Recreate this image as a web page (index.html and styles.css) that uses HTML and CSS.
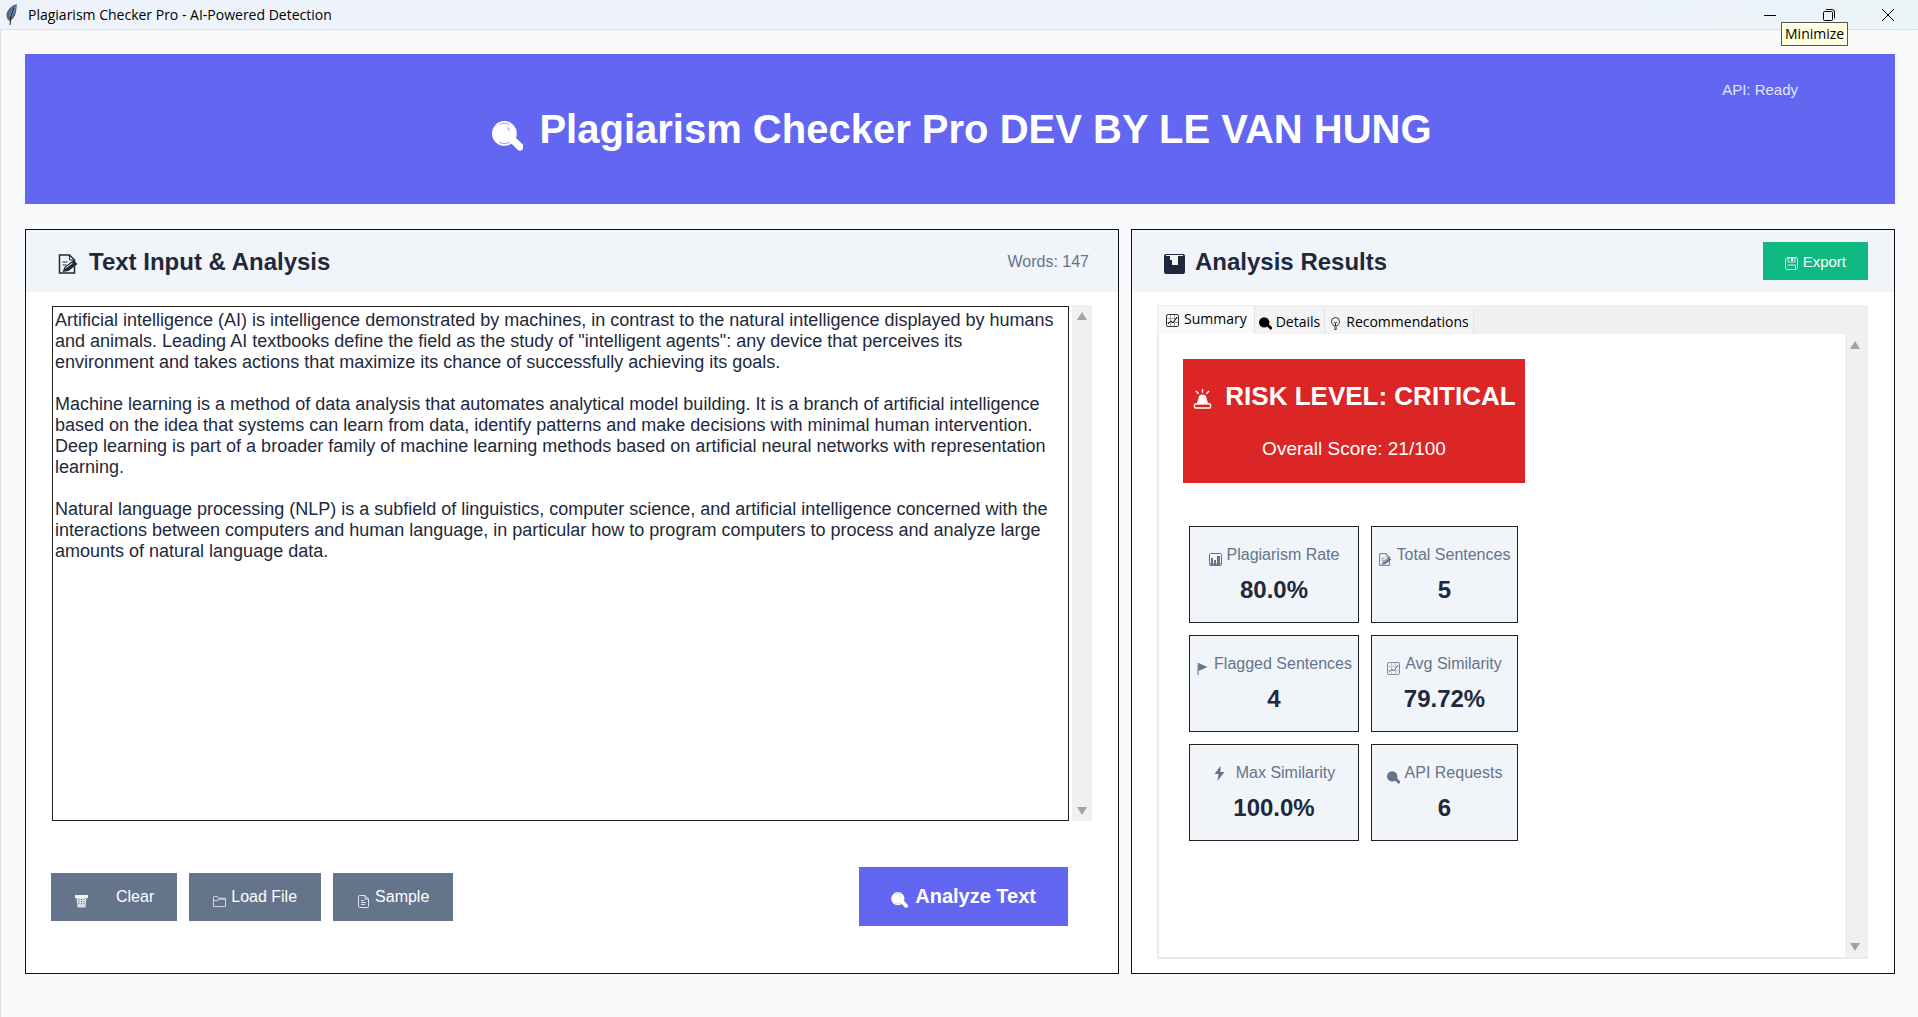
FILE: index.html
```html
<!DOCTYPE html>
<html lang="en">
<head>
<meta charset="utf-8">
<title>Plagiarism Checker Pro - AI-Powered Detection</title>
<link rel="stylesheet" href="styles.css">
</head>
<body>
<svg class="sprite" aria-hidden="true">
  <symbol id="magnifier" viewBox="0 0 30 29">
    <path d="M20 18l7 7" stroke="currentColor" stroke-width="7" stroke-linecap="round"/>
    <circle cx="12" cy="12" r="12" fill="currentColor"/>
    <path class="glint" d="M7 3.500q5-2.500 10 0M7 20.500q5 2.500 10 0M14.500 6.500q2.500.5 2 3" fill="none"/>
  </symbol>
  <symbol id="memo" viewBox="0 0 20 20">
    <path d="M1 1h10l5 5v13H1z" fill="none" stroke="currentColor" stroke-width="1.500"/>
    <path d="M11 1v5h5M4 8h5M4 11h4" fill="none" stroke="currentColor"/>
    <path d="M4 18l2-5 9-7 4 4-9 7z" fill="currentColor"/>
    <path d="M7 14l7-5" class="memo-line"/>
  </symbol>
  <symbol id="bars" viewBox="0 0 21 20">
    <path fill="currentColor" d="M2 0h17q2 0 2 2v16q0 2-2 2H2q-2 0-2-2V2q0-2 2-2z"/>
    <path class="bars-gap" d="M2 1h17v1h-5v9H8V6H6V2H2z"/>
  </symbol>
  <symbol id="columns" viewBox="0 0 13 13">
    <rect x=".5" y=".5" width="12" height="12" rx="1" fill="none" stroke="currentColor"/>
    <path d="M2 5h2v7H2zM5 7h2v5H5zM8 3h3v9H8z" fill="currentColor"/>
    <path d="M1 10h11v2H1z" fill="currentColor" opacity=".6"/>
  </symbol>
  <symbol id="chart" viewBox="0 0 13 13">
    <rect x=".5" y=".5" width="12" height="12" rx="1.500" fill="none" stroke="currentColor" opacity=".8"/>
    <path d="M4.500 1v11M8.500 1v11M1 4.500h11M1 8.500h11" stroke="currentColor" opacity=".35"/>
    <path d="M2 10l3-3 2 2 4-6" fill="none" stroke="currentColor"/>
  </symbol>
  <symbol id="bulb" viewBox="0 0 9 13">
    <path d="M3 9Q.5 6.500.5 4.500a4 4 0 0 1 8 0Q8.500 6.500 6 9zM3 11h3M3.500 12.500h2M3 5l1.500 1L6 5M4.500 6v3" fill="none" stroke="currentColor" opacity=".8"/>
  </symbol>
  <symbol id="siren" viewBox="0 0 19 21">
    <path d="M4 16V14l2-7q3.500-2.500 7 0l2 7v2z" fill="currentColor"/>
    <path d="M9.500 0v4M2.500 2l3 3M16.500 2l-3 3" stroke="currentColor" stroke-width="1.500"/>
    <rect x="1" y="15.500" width="17" height="4.500" rx="2" fill="none" stroke="currentColor" stroke-width="1.500"/>
  </symbol>
  <symbol id="flag" viewBox="0 0 10 13">
    <path d="M.5 1v12" stroke="currentColor"/><path d="M1 1l9 4-9 4z" fill="currentColor"/>
  </symbol>
  <symbol id="bolt" viewBox="0 0 10 15">
    <path d="M6 0L0 8h4l-1 7 7-9H6z" fill="currentColor"/>
  </symbol>
  <symbol id="trash" viewBox="0 0 13 13">
    <path d="M0 0h13v3H0z" fill="currentColor" opacity=".9"/>
    <path d="M1.500 3h10l-1 9.500h-8z" fill="currentColor" opacity=".75"/>
    <path d="M4 4v6M6.500 4v6M9 4v6" stroke="#64748b" stroke-dasharray="1 1"/>
  </symbol>
  <symbol id="folder" viewBox="0 0 14 12">
    <path d="M.5 11V1.500q0-1 1-1h3L6 2.500h6.500q1 0 1 1V11q0 .5-.5.5H1q-.5 0-.5-.5zM.5 5H5l1-1.500h7" fill="none" stroke="currentColor" opacity=".8"/>
  </symbol>
  <symbol id="page" viewBox="0 0 11 13">
    <path d="M1.500.5H7l3.500 3.500v7.500q0 1-1 1h-8q-1 0-1-1v-10q0-1 1-1zM7 .5V4h3.500M3 5.500h3M3 7.500h5M3 9.500h4" fill="none" stroke="currentColor" opacity=".8"/>
  </symbol>
  <symbol id="disk" viewBox="0 0 13 13">
    <path d="M2 .5h9.500l1 1.500v9.500l-1 1H1.500l-1-1V2zM3 1h7v4H3zM2.500 8h8v4" fill="none" stroke="currentColor" opacity=".8"/><path d="M6 1h2v3H6z" fill="currentColor"/>
  </symbol>
</svg>

<header class="titlebar">
  <svg class="feather" viewBox="0 0 12 21" aria-hidden="true">
    <path d="M11 0Q4 2 1 8-.5 12 2 16l2 1q5-3 6-9z" fill="#5c646e"/>
    <path d="M10 2Q5 5 3 12l2 1q4-4 5-11z" fill="#4f9be8"/>
    <path d="M8 4Q4 11 4 21" fill="none" stroke="#15181c"/>
  </svg>
  <span class="window-title">Plagiarism Checker Pro - AI-Powered Detection</span>
  <div class="window-buttons">
    <button aria-label="Minimize"><svg width="14" height="14" viewBox="0 0 14 14"><path d="M1 7.500h12"/></svg><span class="tooltip" role="tooltip">Minimize</span></button>
    <button aria-label="Restore"><svg width="14" height="14" viewBox="0 0 14 14"><rect x="1.500" y="3.500" width="9" height="9" rx="1"/><path d="M4 1.500h6q2.500 0 2.500 2.500v6.500"/></svg></button>
    <button aria-label="Close"><svg width="14" height="14" viewBox="0 0 14 14"><path d="M1 1l12 12M13 1L1 13"/></svg></button>
  </div>
</header>

<div class="app">
  <div class="banner">
    <h1><svg class="icon-xl"><use href="#magnifier"/></svg>Plagiarism Checker Pro DEV BY LE VAN HUNG</h1>
    <span class="api-status">API: Ready</span>
  </div>

  <main class="columns">
    <section class="panel">
      <div class="panel-head">
        <h2><svg class="icon-lg"><use href="#memo"/></svg><label for="source">Text Input &amp; Analysis</label></h2>
        <span class="word-count">Words: 147</span>
      </div>
      <div class="input-body">
        <div class="editor">
          <textarea id="source" spellcheck="false">Artificial intelligence (AI) is intelligence demonstrated by machines, in contrast to the natural intelligence displayed by humans and animals. Leading AI textbooks define the field as the study of "intelligent agents": any device that perceives its environment and takes actions that maximize its chance of successfully achieving its goals.

Machine learning is a method of data analysis that automates analytical model building. It is a branch of artificial intelligence based on the idea that systems can learn from data, identify patterns and make decisions with minimal human intervention. Deep learning is part of a broader family of machine learning methods based on artificial neural networks with representation learning.

Natural language processing (NLP) is a subfield of linguistics, computer science, and artificial intelligence concerned with the interactions between computers and human language, in particular how to program computers to process and analyze large amounts of natural language data.</textarea>
          <div class="scrollbar"><i class="up"></i><i class="down"></i></div>
        </div>
        <div class="actions">
          <button class="btn btn-clear"><svg class="icon"><use href="#trash"/></svg>Clear</button>
          <button class="btn"><svg class="icon"><use href="#folder"/></svg>Load File</button>
          <button class="btn"><svg class="icon"><use href="#page"/></svg>Sample</button>
          <button class="btn btn-analyze"><svg class="icon-md"><use href="#magnifier"/></svg>Analyze Text</button>
        </div>
      </div>
    </section>

    <section class="panel">
      <div class="panel-head">
        <h2><svg class="icon-lg"><use href="#bars"/></svg>Analysis Results</h2>
        <button class="btn btn-export"><svg class="icon"><use href="#disk"/></svg>Export</button>
      </div>
      <div class="notebook">
        <div class="tabs" role="tablist">
          <button class="tab tab-active" role="tab" aria-selected="true"><svg class="icon"><use href="#chart"/></svg>Summary</button>
          <button class="tab" role="tab"><svg class="icon"><use href="#magnifier"/></svg>Details</button>
          <button class="tab" role="tab"><svg class="icon"><use href="#bulb"/></svg>Recommendations</button>
        </div>
        <div class="pane" role="tabpanel">
          <div class="summary">
            <div class="risk">
              <p class="risk-level"><svg class="icon-lg"><use href="#siren"/></svg>RISK LEVEL: CRITICAL</p>
              <p class="risk-score">Overall Score: 21/100</p>
            </div>
            <div class="metrics">
              <div class="metric"><span class="metric-name"><svg class="icon"><use href="#columns"/></svg>Plagiarism Rate</span><strong>80.0%</strong></div>
              <div class="metric"><span class="metric-name"><svg class="icon"><use href="#memo"/></svg>Total Sentences</span><strong>5</strong></div>
              <div class="metric"><span class="metric-name"><svg class="icon"><use href="#flag"/></svg>Flagged Sentences</span><strong>4</strong></div>
              <div class="metric"><span class="metric-name"><svg class="icon"><use href="#chart"/></svg>Avg Similarity</span><strong>79.72%</strong></div>
              <div class="metric"><span class="metric-name metric-bolt"><svg class="icon"><use href="#bolt"/></svg>Max Similarity</span><strong>100.0%</strong></div>
              <div class="metric"><span class="metric-name"><svg class="icon"><use href="#magnifier"/></svg>API Requests</span><strong>6</strong></div>
            </div>
          </div>
          <div class="scrollbar"><i class="up"></i><i class="down"></i></div>
        </div>
      </div>
    </section>
  </main>
</div>
</body>
</html>
```
FILE: styles.css
```css
* { box-sizing: border-box; }

body {
  margin: 0;
  min-height: 100vh;
  display: flex;
  flex-direction: column;
  background: #f9fafc;
  color: #1e293b;
  font-family: "Liberation Sans", Arial, sans-serif;
  font-size: 16px;
}

h1, h2, p { margin: 0; }
button { border: 0; margin: 0; padding: 0; font: inherit; }
svg { flex: none; }
.sprite { position: absolute; width: 0; height: 0; }

.icon { width: 13px; height: 13px; }
.icon-md { width: 17px; height: 16px; }
.icon-lg { width: 21px; height: 20px; }
.icon-xl { width: 31px; height: 30px; }

.glint { stroke: #6366f1; stroke-width: 1; opacity: 0.6; }
.memo-line { stroke: #f1f5f9; }
.bars-gap { fill: #f1f5f9; }

/* Window title bar */
.titlebar {
  display: flex;
  align-items: center;
  height: 30px;
  padding: 0 1px 0 6px;
  background: linear-gradient(90deg, #eef3fb 85%, #ebf4f7);
  border-bottom: 1px solid #dde1e5;
  color: #000;
  font: 14px "Open Sans", "Noto Sans", sans-serif;
}
.feather { width: 12px; height: 21px; margin-right: 10px; }
.window-buttons { display: flex; margin-left: auto; }
.window-buttons button {
  position: relative;
  display: grid;
  place-items: center;
  width: 59px;
  height: 28px;
  background: none;
  color: #000;
}
.window-buttons svg { fill: none; stroke: #000; }
.tooltip {
  position: absolute;
  top: 21px;
  left: 41px;
  z-index: 1;
  padding: 0 3px;
  border: 1px solid #555;
  background: #ffffe1;
  line-height: 22px;
}

.app {
  flex: 1;
  display: flex;
  flex-direction: column;
  gap: 25px;
  padding: 24px 23px 43px 24px;
  border-left: 1px solid #dfe0e2;
}

.banner {
  position: relative;
  display: flex;
  justify-content: center;
  height: 150px;
  padding: 52px 0 0 4px;
  background: #6366f1;
  color: #fff;
}
h1 {
  display: flex;
  align-items: center;
  gap: 16px;
  height: 46px;
  font-size: 40px;
  line-height: 46px;
}
h1 svg { margin-top: 14px; }
.api-status {
  position: absolute;
  top: 27px;
  right: 97px;
  color: #e0e7ff;
  font-size: 15px;
  line-height: 18px;
}

.columns {
  flex: 1;
  display: grid;
  grid-template-columns: 1094fr 764fr;
  gap: 12px;
}
.panel {
  display: flex;
  flex-direction: column;
  border: 1px solid #111;
  background: #fff;
}
.panel-head {
  display: flex;
  align-items: center;
  justify-content: space-between;
  height: 62px;
  padding: 0 26px 0 32px;
  background: #f1f5f9;
}
h2 {
  display: flex;
  align-items: center;
  gap: 10px;
  padding-top: 2px;
  font-size: 24px;
  line-height: 28px;
}
h2 svg { margin-top: 4px; }
.word-count { padding: 2px 3px 0 0; color: #64748b; }

.btn {
  display: flex;
  align-items: center;
  justify-content: center;
  gap: 5px;
  height: 48px;
  padding: 1px 24px 0;
  background: #64748b;
  color: #fff;
}
.btn svg { margin-top: 8px; }
.btn-clear { gap: 28px; padding: 1px 23px 0 24px; }
.btn-analyze {
  gap: 7px;
  height: 59px;
  margin-left: auto;
  padding: 0 32px;
  background: #6366f1;
  font-size: 20px;
  font-weight: bold;
}
.btn-analyze svg { margin-top: 6px; }
.btn-export {
  height: 38px;
  padding: 0 22px;
  background: #10b981;
  font-size: 15px;
}
.btn-export svg { margin-top: 5px; }

.input-body {
  flex: 1;
  display: flex;
  flex-direction: column;
  gap: 46px;
  padding: 13px 26px 47px 25px;
}
.editor { flex: 1; display: flex; gap: 3px; padding-left: 1px; }
textarea {
  flex: 1;
  margin: 1px 0 0;
  padding: 3px 8px 2px 2px;
  border: 1px solid #222;
  border-radius: 0;
  outline: 0;
  resize: none;
  overflow: hidden;
  background: #fff;
  color: #1e293b;
  font: 18px/21px "Liberation Sans", Arial, sans-serif;
}

.scrollbar {
  display: flex;
  flex-direction: column;
  align-items: center;
  justify-content: space-between;
  width: 20px;
  padding: 7px 0 6px;
  background: #f0f0f0;
}
.scrollbar i { border: 5px solid transparent; }
.scrollbar .up { border-top: 0; border-bottom: 8px solid #a3a3a3; }
.scrollbar .down { border-bottom: 0; border-top: 8px solid #a3a3a3; }

.actions { display: flex; align-items: center; gap: 12px; padding-right: 24px; }

/* Results notebook */
.notebook {
  flex: 1;
  display: flex;
  flex-direction: column;
  margin: 13px 26px 14px 25px;
  background: #f0f0f0;
}
.tabs {
  display: flex;
  align-items: flex-end;
  height: 29px;
  padding-left: 2px;
  font: 14px "Open Sans", "Noto Sans", sans-serif;
}
.tab {
  display: flex;
  align-items: center;
  gap: 4px;
  height: 25px;
  padding: 0 4px;
  border-right: 1px solid #e2e2e2;
  background: #f3f3f3;
  color: #000;
}
.tab svg { margin-top: 3px; }
.tab-active { gap: 5px; height: 28px; padding: 0 7px 3px; background: #fafafa; }
.pane {
  flex: 1;
  display: flex;
  justify-content: space-between;
  padding-right: 3px;
  border: solid #ebebeb;
  border-width: 0 0 2px 2px;
  background: linear-gradient(90deg, #fff calc(100% - 23px), #f0f0f0 0);
}
.summary { padding: 25px 24px; }

.risk {
  width: 342px;
  height: 124px;
  padding-top: 20px;
  background: #dc2626;
  color: #fff;
}
.risk-level {
  display: flex;
  align-items: center;
  justify-content: center;
  gap: 12px;
  font-size: 26px;
  font-weight: bold;
  line-height: 34px;
}
.risk-level svg { margin-top: 6px; }
.risk-score { padding-top: 24px; text-align: center; font-size: 19px; line-height: 24px; }

.metrics {
  display: grid;
  grid-template-columns: 170px 147px;
  gap: 12px;
  margin: 43px 0 0 6px;
}
.metric {
  height: 97px;
  padding-top: 17px;
  border: 1px solid #222;
  background: #f1f5f9;
  text-align: center;
}
.metric-name {
  display: flex;
  align-items: center;
  justify-content: center;
  gap: 5px;
  height: 22px;
  color: #64748b;
}
.metric-name svg { margin-top: 8px; }
.metric-bolt { gap: 10px; }
.metric-bolt svg { height: 15px; margin-top: 1px; }
.metric strong { display: block; padding-top: 10px; font-size: 24px; line-height: 28px; }
```
